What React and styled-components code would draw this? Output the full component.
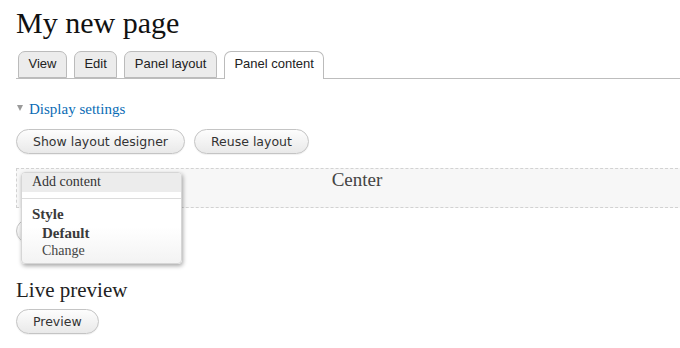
import React from "react";
import styled, { createGlobalStyle } from "styled-components";

const Global = createGlobalStyle`
  html, body { margin: 0; padding: 0; background: #fff; }
  body { font-family: "Liberation Serif", serif; color: #333; }
`;

const Viewport = styled.div`
  width: 680px;
  height: 348px;
  overflow: hidden;
`;

const Page = styled.div`
  width: 682px;
  padding-left: 16px;
`;

const Title = styled.h1`
  margin: 0;
  padding-top: 5px;
  font: normal 30px/36px "Liberation Serif", serif;
  color: #111;
`;

const Tabs = styled.ul`
  display: flex;
  align-items: flex-end;
  gap: 7px;
  list-style: none;
  margin: 10px 0 0;
  padding: 0 0 0 2px;
  height: 27px;
  border-bottom: 1px solid #bdbdbd;
`;

const Tab = styled.li`
  box-sizing: border-box;
  height: ${(p) => (p.$active ? "28px" : "27px")};
  margin-bottom: ${(p) => (p.$active ? "-1px" : "0")};
  padding: 0 9.5px 2px;
  border: 1px solid #bbb;
  border-bottom: ${(p) => (p.$active ? "none" : "1px solid #bbb")};
  border-radius: 7px 7px 0 0;
  background: ${(p) => (p.$active ? "#fff" : "#ececec")};
  font: 13px/24px "Liberation Sans", Arial, sans-serif;
  color: #222;
  white-space: nowrap;
`;

const Disclosure = styled.a`
  display: flex;
  align-items: center;
  gap: 6px;
  margin-top: 20px;
  font: 15px/20px "Liberation Serif", serif;
  color: #0a6bb5;
  text-decoration: none;
  margin-left: 1px;
`;

const Triangle = styled.span`
  width: 0;
  height: 0;
  border-left: 3px solid transparent;
  border-right: 3px solid transparent;
  border-top: 6px solid #9a9a9a;
  margin-top: -2px;
`;

const ButtonRow = styled.div`
  display: flex;
  gap: 9px;
  margin-top: 10px;
`;

const Button = styled.button`
  box-sizing: border-box;
  height: 25px;
  padding: 0 16px;
  border: 1px solid #c4c4c4;
  border-radius: 13px;
  background: linear-gradient(#fdfdfd, #e9e9e9);
  box-shadow: 0 1px 1px rgba(0, 0, 0, 0.06);
  font: 12.5px/23px "DejaVu Sans", Verdana, sans-serif;
  color: #333;
  white-space: nowrap;
  cursor: pointer;
`;

const RegionWrap = styled.div`
  position: relative;
  margin-top: 14px;
`;

const Region = styled.div`
  box-sizing: border-box;
  height: 40px;
  border: 1px dashed #d2d2d2;
  background: #f7f7f7;
  text-align: center;
  font: 19px/22px "Liberation Serif", serif;
  color: #444;
`;

const PaneButton = styled(Button)`
  display: block;
  margin-top: 11px;
  width: 110px;
  height: 24px;
`;

const Menu = styled.div`
  position: absolute;
  top: 4px;
  left: 5px;
  width: 161px;
  box-sizing: border-box;
  padding-bottom: 2px;
  border: 1px solid #d6d6d6;
  border-radius: 4px;
  background: linear-gradient(#fff 60%, #f3f3f3);
  box-shadow: 1px 2px 4px rgba(0, 0, 0, 0.35);
  font: 14px/18.5px "Liberation Serif", serif;
  color: #444;
  overflow: hidden;
`;

const MenuHeader = styled.div`
  background: #ececec;
  padding: 0 10px 2px;
  line-height: 17px;
  color: #333;
`;

const Separator = styled.div`
  height: 1px;
  background: #dcdcdc;
  margin-top: 6px;
  margin-bottom: 6px;
`;

const MenuItem = styled.div`
  padding-left: ${(p) => (p.$indent ? 20 : 10)}px;
  font-weight: ${(p) => (p.$bold ? "bold" : "normal")};
  font-size: ${(p) => (p.$bold ? "15px" : "14px")};
  color: ${(p) => (p.$bold ? "#3a3a3a" : "#444")};
`;

const SubHeading = styled.h2`
  margin: 34px 0 0;
  font: normal 21px/26px "Liberation Serif", serif;
  color: #222;
`;

const PreviewRow = styled.div`
  margin-top: 6px;
`;

export default function App() {
  return (
    <Viewport>
      <Global />
      <Page>
        <Title>My new page</Title>
        <Tabs>
          <Tab>View</Tab>
          <Tab>Edit</Tab>
          <Tab>Panel layout</Tab>
          <Tab $active>Panel content</Tab>
        </Tabs>
        <Disclosure href="#">
          <Triangle />
          Display settings
        </Disclosure>
        <ButtonRow>
          <Button>Show layout designer</Button>
          <Button>Reuse layout</Button>
        </ButtonRow>
        <RegionWrap>
          <Region>Center</Region>
          <PaneButton aria-label="Settings" />
          <Menu>
            <MenuHeader>Add content</MenuHeader>
            <Separator />
            <MenuItem $bold>Style</MenuItem>
            <MenuItem $bold $indent>Default</MenuItem>
            <MenuItem $indent>Change</MenuItem>
          </Menu>
        </RegionWrap>
        <SubHeading>Live preview</SubHeading>
        <PreviewRow>
          <Button>Preview</Button>
        </PreviewRow>
      </Page>
    </Viewport>
  );
}
